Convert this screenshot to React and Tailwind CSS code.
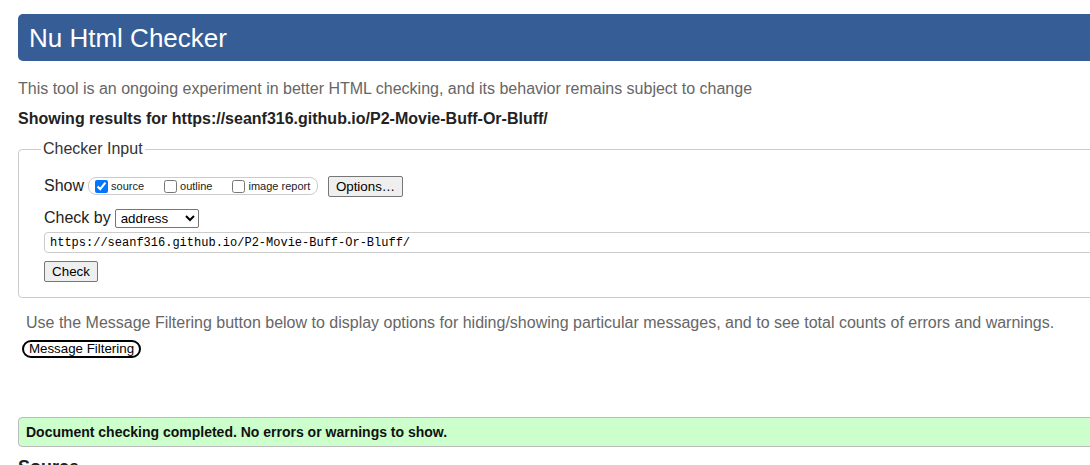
export default function App() {
  const sans = { fontFamily: '"Liberation Sans", Arial, sans-serif' }
  return (
    <div className="h-[465px] w-full overflow-hidden bg-white" style={sans}>
      <div className="w-[1120px] pl-[18px] pt-[14px]">
        <header className="flex h-[47px] items-center rounded-[5px] bg-[#365d95] pl-[11px]">
          <h1 className="text-[26px] leading-none text-white">Nu Html Checker</h1>
        </header>

        <p className="mt-[19px] text-[16px] leading-[18px] text-[#666]">
          This tool is an ongoing experiment in better HTML checking, and its behavior remains subject to change
        </p>
        <p className="mt-[12px] text-[16px] font-bold leading-[18px] text-[#222]">
          Showing results for https://seanf316.github.io/P2-Movie-Buff-Or-Bluff/
        </p>

        <fieldset className="relative mt-[21px] h-[149px] rounded-[4px] border border-[#ccc] px-[25px] pt-[17px]">
          <legend className="absolute -top-[11px] left-[22px] bg-white px-[2px] text-[16px] leading-[20px] text-[#333]">
            Checker Input
          </legend>

          <div className="mt-[8px] flex h-[22px] items-center">
            <span className="text-[16px] text-[#222]">Show</span>
            <div className="ml-[4px] flex h-[18px] w-[230px] shrink-0 items-center whitespace-nowrap rounded-[8px] border border-[#ccc] pl-[6px] text-[11px] text-[#222]">
              <label className="flex shrink-0 items-center">
                <input type="checkbox" defaultChecked className="h-[13px] w-[13px]" />
                <span className="ml-[3px]">source</span>
              </label>
              <label className="ml-[20px] flex shrink-0 items-center">
                <input type="checkbox" className="h-[13px] w-[13px]" />
                <span className="ml-[3px]">outline</span>
              </label>
              <label className="ml-[20px] flex shrink-0 items-center">
                <input type="checkbox" className="h-[13px] w-[13px]" />
                <span className="ml-[3px]">image report</span>
              </label>
            </div>
            <button className="ml-[10px] h-[21px] w-[75px] shrink-0 rounded-[2px] border border-[#767676] bg-[#efefef] text-[13.33px] text-black">
              Options…
            </button>
          </div>

          <div className="mt-[10px] flex h-[22px] items-center">
            <span className="text-[16px] text-[#222]">Check by</span>
            <select className="ml-[4px] h-[19px] w-[84px] rounded-[2px] border border-[#767676] bg-white pl-[1px] text-[13.33px] text-black">
              <option>address</option>
            </select>
          </div>

          <input
            readOnly
            value="https://seanf316.github.io/P2-Movie-Buff-Or-Bluff/"
            className="mt-[3px] block h-[21px] w-full rounded-[4px] border border-[#ccc] px-[5px] text-[12px] text-black"
            style={{ fontFamily: '"Liberation Mono", "DejaVu Sans Mono", monospace' }}
          />

          <button className="mt-[8px] h-[21px] w-[54px] rounded-[2px] border border-[#767676] bg-[#efefef] text-[13.33px] text-black">
            Check
          </button>
        </fieldset>

        <p className="ml-[8px] mt-[16px] text-[16px] leading-[18px] text-[#666]">
          Use the Message Filtering button below to display options for hiding/showing particular messages, and to see total counts of errors and warnings.
        </p>
        <button className="ml-[4px] mt-[8px] flex h-[18px] w-[119px] items-center justify-center rounded-full border-2 border-black text-[13.33px] text-black">
          Message Filtering
        </button>

        <div className="mt-[59px] flex h-[30px] items-center rounded-[4px] border border-[#bbb] bg-[#ccffcc] pl-[7px]">
          <span className="text-[14px] font-bold text-[#111]">
            Document checking completed. No errors or warnings to show.
          </span>
        </div>

        <h2 className="mt-[11px] text-[18px] font-bold leading-none text-[#222]">Source</h2>
      </div>
    </div>
  )
}
